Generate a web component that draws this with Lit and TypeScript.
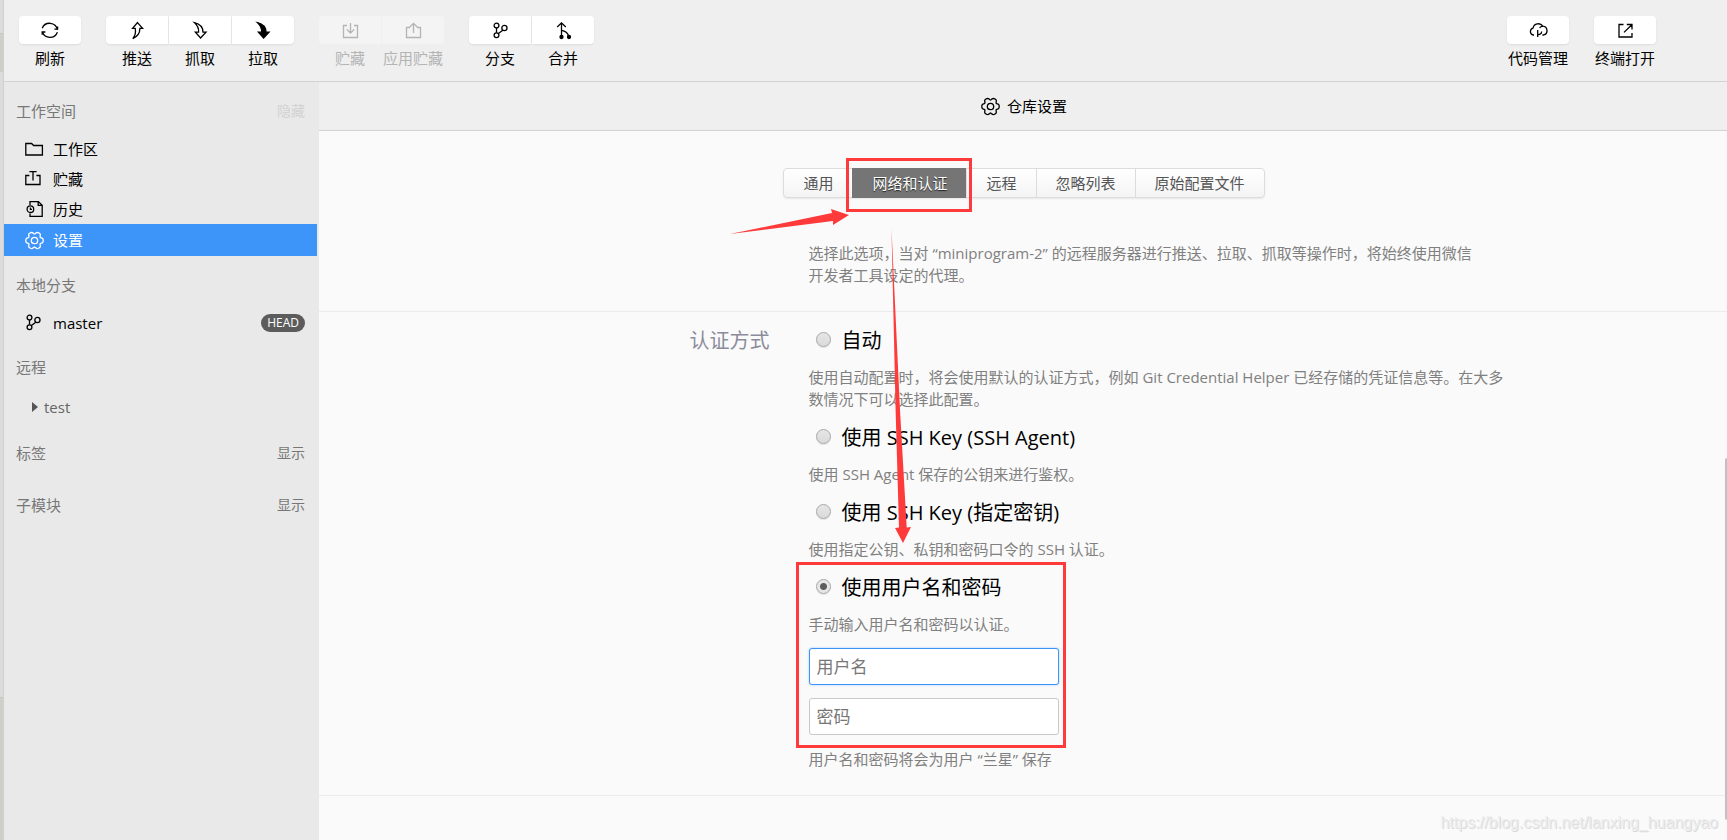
import { LitElement, html, css, svg, nothing, TemplateResult } from "lit";
import { customElement, property, state } from "lit/decorators.js";
import { classMap } from "lit/directives/class-map.js";

// Six-lobed cog outline, sampled around its centre.
const cog = Array.from({ length: 72 }, (_, i) => {
  const a = (i * Math.PI) / 36;
  const r = 7.9 + 1.1 * Math.cos(6 * a) - 0.3 * Math.cos(12 * a);
  return `${(9.5 + r * Math.cos(a)).toFixed(2)} ${(9.5 + r * Math.sin(a)).toFixed(2)}`;
}).join("L");

const branch = svg`
  <circle cx="4.5" cy="3.6" r="2.4"/><circle cx="4.5" cy="13.2" r="2.4"/><circle cx="12.4" cy="6" r="2.6"/>
  <path d="M4.5 6v4.8M10.8 8.2L6.4 11.6"/>`;

const icons: Record<string, TemplateResult> = {
  refresh: svg`
    <path d="M1.2 7.2A8 8 0 0 1 16.4 8.6M16.4 11.2A8 8 0 0 1 1.4 11"/>
    <path d="M13.4 8.2H16.6V5.4M4.4 11H1.2V13.8"/>`,
  push: svg`<path d="M9.5 1.6L14.6 7.4H11.9C11.9 12 9 15.6 4.8 17.6 7.4 14.4 8 11 7.2 7.4H4.6Z"/>`,
  fetch: svg`<path d="M9.6 17L4.4 11.2H7.6C8 7.4 6.4 4.4 3.4 1.6 8.6 2.8 12 6.4 12 11.2H15Z"/>`,
  pull: svg`<path class="solid" d="M9.6 17L4.4 11.2H7.6C8 7.4 6.4 4.4 3.4 1.6 8.6 2.8 12 6.4 12 11.2H15Z"/>`,
  stash: svg`<path d="M6 4.5H2.5V16.5H16.5V4.5H13M9.5 2V12M5.8 8.4L9.5 12 13.2 8.4"/>`,
  apply: svg`<path d="M6 6.5H2.5V16.5H16.5V6.5H13M9.5 12V2.4M5.8 6L9.5 2.4 13.2 6"/>`,
  branch: svg`<g transform="translate(1 1)">${branch}</g>`,
  sideBranch: branch,
  merge: svg`
    <path d="M7.5 15V2M3.2 6L7.5 1.8 11.8 6M7.5 9.4C11 10 13.6 11.4 14.6 15"/>
    <circle class="solid" cx="7.5" cy="16" r="1.5"/><circle class="solid" cx="15" cy="16" r="1.5"/>`,
  cloud: svg`
    <path d="M5 14H4.2A3.5 3.5 0 0 1 4 7.2 5.4 5.4 0 0 1 13.8 5.2 4.5 4.5 0 0 1 14.8 14H13.4"/>
    <path d="M8.7 16V9M8.7 13.6C11.4 13.8 12.6 12.4 12.6 10.4M10.6 6.8A3.6 3.6 0 0 1 13.8 5.4"/>`,
  open: svg`<path d="M7.5 3.5H3V16H16V12M10.8 3.5H16V8.6M15.8 3.8L8 11.4"/>`,
  folder: svg`<path d="M.8 3.5H6.6L8.6 5.5H17.4V15H.8Z"/>`,
  sideStash: svg`<path d="M4.4 5.5H.8V14.5H15V5.5H11.4M8 10.5V1.6M4.4 1.6H11.6"/>`,
  history: svg`
    <path d="M5 5V1.6H13.4L17.2 5.2V16.4H5V13.4M13.2 1.6V5.4H17.2"/>
    <circle cx="5.4" cy="9.2" r="3.3"/><path d="M5.4 7.4V9.4H7"/>`,
  gear: svg`<path d=${`M${cog}Z`}/><circle cx="9.5" cy="9.5" r="3.2"/>`,
};

const icon = (name: string) =>
  html`<svg class="icon" viewBox="0 0 19 19" width="19" height="19" aria-hidden="true">${icons[name]}</svg>`;

const base = css`
  * { box-sizing: border-box; }
  button, input { font: inherit; color: inherit; margin: 0; }
  button { border: 0; padding: 0; background: none; cursor: pointer; }
  .icon { display: block; flex: none; fill: none; stroke: currentColor; stroke-width: 1.3; }
  .solid { fill: currentColor; }
`;

interface Tool { icon: string; label: string; disabled?: boolean }

@customElement("tool-group")
class ToolGroup extends LitElement {
  @property({ attribute: false }) tools: Tool[] = [];

  static styles = [base, css`
    :host { display: block; }
    .group { display: flex; gap: 1px; }
    .tool { width: 62px; line-height: 28px; display: flex; flex-direction: column; align-items: center; white-space: nowrap; }
    .face {
      width: 100%; height: 28px; display: grid; place-items: center;
      background: #fff; box-shadow: 0 1px 2px rgba(0, 0, 0, .08);
    }
    .tool:first-child .face { border-radius: 4px 0 0 4px; }
    .tool:last-child .face { border-radius: 0 4px 4px 0; }
    .tool:only-child .face { border-radius: 4px; }
    .tool:disabled { color: #b4b4b4; cursor: default; }
    .tool:disabled .face { background: #f4f4f4; box-shadow: none; }
  `];

  render() {
    return html`<div class="group">${this.tools.map(t => html`
      <button class="tool" ?disabled=${t.disabled}>
        <span class="face">${icon(t.icon)}</span><span>${t.label}</span>
      </button>`)}</div>`;
  }
}

@customElement("repo-sidebar")
class RepoSidebar extends LitElement {
  @state() current = "设置";

  static styles = [base, css`
    :host { display: block; background: #e9e9e9; padding: 14px 2px 0 0; color: #000; }
    .heading {
      display: flex; justify-content: space-between; align-items: center;
      height: 30px; padding: 0 12px; color: #777;
    }
    h2 { margin: 0; font-size: 15px; font-weight: inherit; }
    .toggle { font-size: 14px; }
    .faint { color: #d2d2d2; }
    .list { display: flex; flex-direction: column; padding: 8px 0 14px; }
    .item {
      display: flex; align-items: center; gap: 9px; width: 100%; height: 30px;
      padding: 0 12px 0 21px; text-align: left;
    }
    .selected { height: 32px; background: #3d94f9; color: #fff; }
    .badge {
      margin-left: auto; padding: 0 6px; border-radius: 9px;
      background: #5c5c5c; color: #fff; font-size: 12px; line-height: 18px;
    }
    .remotes { padding: 10px 0 16px; }
    .remote { gap: 6px; padding-left: 28px; color: #666; }
    .caret { border: 5px solid transparent; border-left: 6px solid #555; border-right: 0; }
    .closed { margin-bottom: 22px; }
  `];

  places = [["folder", "工作区"], ["sideStash", "贮藏"], ["history", "历史"], ["gear", "设置"]];

  render() {
    return html`
      <div class="heading"><h2>工作空间</h2><button class="toggle faint">隐藏</button></div>
      <nav class="list">${this.places.map(([glyph, name]) => html`
        <button class=${classMap({ item: true, selected: name === this.current })}
          @click=${() => (this.current = name)}>${icon(glyph)}<span>${name}</span></button>`)}
      </nav>
      <div class="heading"><h2>本地分支</h2></div>
      <div class="list"><button class="item">${icon("sideBranch")}<span>master</span><span class="badge">HEAD</span></button></div>
      <div class="heading"><h2>远程</h2></div>
      <div class="list remotes"><button class="item remote"><i class="caret"></i><span>test</span></button></div>
      ${["标签", "子模块"].map(name => html`
        <div class="heading closed"><h2>${name}</h2><button class="toggle">显示</button></div>`)}`;
  }
}

@customElement("repo-settings")
class RepoSettings extends LitElement {
  @state() tab = "网络和认证";
  @state() method = "password";

  static styles = [base, css`
    :host { display: flex; flex-direction: column; min-width: 0; background: #fafafa; }
    .title {
      flex: none; display: flex; align-items: center; justify-content: center; gap: 7px;
      height: 49px; padding-left: 2px; background: #efefef; border-bottom: 1px solid #d2d2d2;
    }
    h1 { margin: 0; font-size: 15px; font-weight: inherit; }
    .body { flex: 1; min-height: 0; overflow: hidden; padding-top: 37px; }
    .bar { display: flex; justify-content: center; padding-left: 2px; margin-bottom: 44px; }
    .tabs {
      display: flex; height: 30px;
      border: 1px solid #dcdcdc; border-radius: 4px; color: #555;
      background: linear-gradient(#fff, #f4f4f4); box-shadow: 0 1px 2px rgba(0, 0, 0, .08);
    }
    .tab { padding: 0 19px; white-space: nowrap; }
    .tab + .tab { border-left: 1px solid #dcdcdc; }
    .tabs .active {
      margin: -1px 0; background: #757575; color: #fff;
      border-color: #757575; text-shadow: 0 1px 1px #222;
    }
    .section {
      display: grid; grid-template-columns: 32% minmax(0, 700px); column-gap: 39px;
      border-bottom: 1px solid #ececec; padding-bottom: 25px;
    }
    .auth { padding-top: 14px; }
    .name { text-align: right; font-size: 20px; line-height: 30px; color: #8c8c9a; }
    .content { grid-column: 2; }
    .note { margin: 0; line-height: 22px; color: #808080; }
    .proxy { padding-right: 30px; }
    .choice { display: flex; align-items: center; gap: 11px; padding-left: 7px; margin-bottom: 10px; font-size: 20px; line-height: 30px; }
    .note + .choice { margin-top: 13px; }
    .choice .radio {
      appearance: none; width: 15px; height: 15px; margin-bottom: 4px; border: 1px solid #a8a8a8; border-radius: 50%;
      background: linear-gradient(#e6e6e6, #dadada); box-shadow: 0 1px 1px rgba(0, 0, 0, .1);
    }
    .choice .radio:checked { background: radial-gradient(circle, #5c5c5c 3px, #e6e6e6 4px); }
    .content .field {
      display: block; width: 250px; height: 37px; margin: 13px 0; padding: 0 7px;
      border: 1px solid #c8c8c8; border-radius: 3px; background: #fff; font-size: 17px; outline: 0;
    }
    .field::placeholder { color: #777; opacity: 1; }
    .content .focused, .content .field:focus { border-color: #3d94f9; box-shadow: 0 0 2px #8fc0fb; }
  `];

  tabs = ["通用", "网络和认证", "远程", "忽略列表", "原始配置文件"];
  methods = [
    ["auto", "自动", "使用自动配置时，将会使用默认的认证方式，例如 Git Credential Helper 已经存储的凭证信息等。在大多数情况下可以选择此配置。"],
    ["agent", "使用 SSH Key (SSH Agent)", "使用 SSH Agent 保存的公钥来进行鉴权。"],
    ["key", "使用 SSH Key (指定密钥)", "使用指定公钥、私钥和密码口令的 SSH 认证。"],
    ["password", "使用用户名和密码", "手动输入用户名和密码以认证。"],
  ];

  render() {
    return html`
      <header class="title">${icon("gear")}<h1>仓库设置</h1></header>
      <div class="body">
        <div class="bar"><nav class="tabs">${this.tabs.map(t => html`
          <button class=${classMap({ tab: true, active: t === this.tab })} @click=${() => (this.tab = t)}>${t}</button>`)}
        </nav></div>
        <section class="section">
          <div class="content proxy">
            <p class="note">选择此选项，当对 “miniprogram-2” 的远程服务器进行推送、拉取、抓取等操作时，将始终使用微信开发者工具设定的代理。</p>
          </div>
        </section>
        <section class="section auth">
          <div class="name">认证方式</div>
          <div class="content">
            ${this.methods.map(([id, name, note]) => html`
              <label class="choice"><input class="radio" type="radio" name="method"
                .checked=${id === this.method} @change=${() => (this.method = id)}>${name}</label>
              <p class="note">${note}</p>`)}
            ${this.method === "password" ? html`
              <input class="field focused" type="text" placeholder="用户名" aria-label="用户名">
              <input class="field" type="password" placeholder="密码" aria-label="密码">
              <p class="note">用户名和密码将会为用户 “兰星” 保存</p>` : nothing}
          </div>
        </section>
      </div>`;
  }
}

@customElement("app-root")
class AppRoot extends LitElement {
  static styles = [base, css`
    :host {
      display: grid; grid-template-columns: 4px minmax(0, 1fr); height: 100vh; position: relative; overflow: hidden;
      font: 15px/22px "Open Sans", "Noto Sans CJK SC", sans-serif; color: #000;
    }
    .edge { display: grid; grid-template-rows: 33px 39px 625px 1fr; background: #dcdcdc; border-right: 1px solid #d0d0d0; overflow: hidden; }
    .pane { background: #cfcec9; border-top: 1px solid #c4c4c4; }
    .app { display: grid; grid-template-rows: 82px minmax(0, 1fr); min-width: 0; }
    .toolbar {
      display: flex; gap: 25px; padding: 16px 71px 0 15px;
      background: #efefef; border-bottom: 1px solid #d2d2d2;
    }
    .spring { margin-left: auto; }
    .columns { display: grid; grid-template-columns: 315px minmax(0, 1fr); }
    .thumb { position: absolute; right: 0; top: 458px; width: 2px; height: 362px; background: #c1c1c1; border-radius: 2px 0 0 2px; }
    .marks { position: absolute; left: 0; top: 0; pointer-events: none; }
    .box { fill: none; stroke: #fe3a3a; stroke-width: 3; }
    .arrow { fill: #fe3a3a; }
    .watermark {
      position: absolute; right: 9px; bottom: 6px; font: 16px/22px "Liberation Sans", sans-serif;
      color: #ececec; text-shadow: 1px 1px 0 #dadada;
    }
  `];

  groups: Tool[][] = [
    [{ icon: "refresh", label: "刷新" }],
    [{ icon: "push", label: "推送" }, { icon: "fetch", label: "抓取" }, { icon: "pull", label: "拉取" }],
    [{ icon: "stash", label: "贮藏", disabled: true }, { icon: "apply", label: "应用贮藏", disabled: true }],
    [{ icon: "branch", label: "分支" }, { icon: "merge", label: "合并" }],
  ];

  render() {
    return html`
      <div class="edge"><i></i><i class="pane"></i><i></i><i class="pane"></i></div>
      <div class="app">
        <header class="toolbar">
          ${this.groups.map(g => html`<tool-group .tools=${g}></tool-group>`)}
          <tool-group class="spring" .tools=${[{ icon: "cloud", label: "代码管理" }]}></tool-group>
          <tool-group .tools=${[{ icon: "open", label: "终端打开" }]}></tool-group>
        </header>
        <div class="columns"><repo-sidebar></repo-sidebar><repo-settings></repo-settings></div>
      </div>
      <i class="thumb"></i>
      <svg class="marks" width="1727" height="840" aria-hidden="true">
        <rect class="box" x="847.5" y="159.5" width="123" height="51"/>
        <rect class="box" x="797.5" y="563.5" width="267" height="183"/>
        <path class="arrow" d="M730 234L832 213 831 209 849 215 833 225 833 221Z"/>
        <path class="arrow" d="M891.5 229L900 410 906.7 527.4 911 527 903 543 895 528 899 527.6 895.6 410Z"/>
      </svg>
      <div class="watermark">https://blog.csdn.net/lanxing_huangyao</div>`;
  }
}
